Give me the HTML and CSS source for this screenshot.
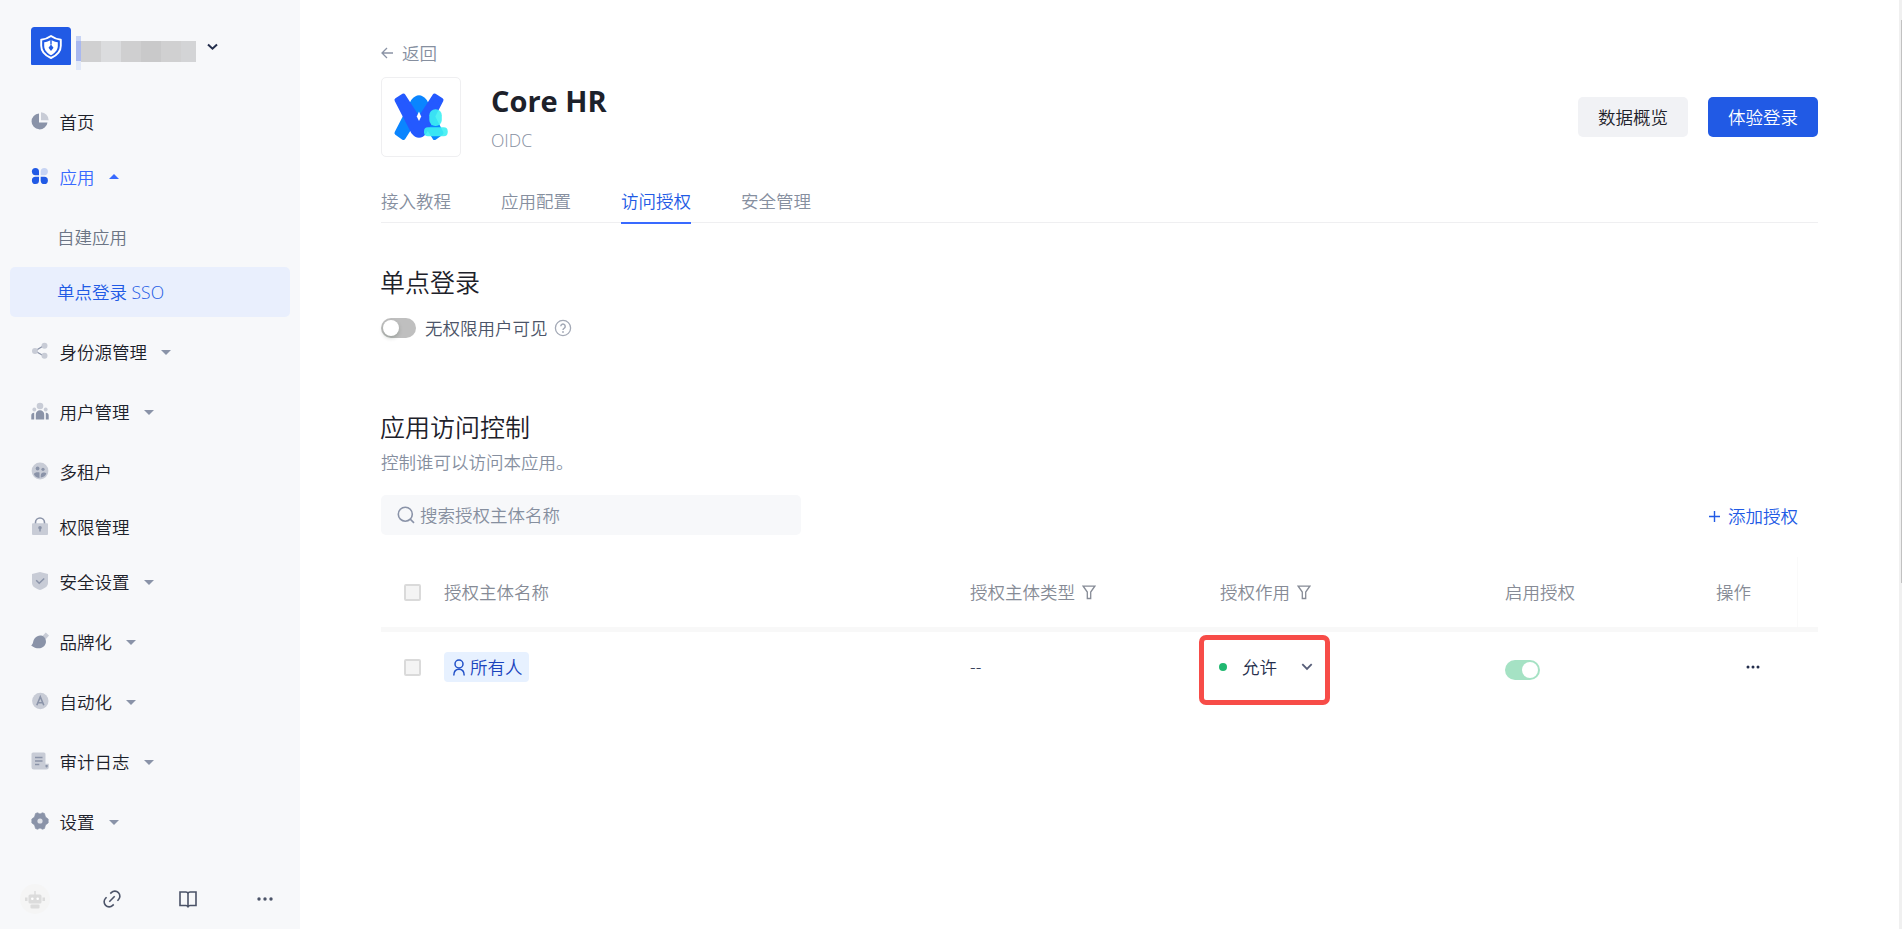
FILE: index.html
```html
<!DOCTYPE html>
<html lang="zh-CN">
<head>
<meta charset="utf-8">
<title>Core HR</title>
<link rel="stylesheet" href="styles.css">
</head>
<body>
<div class="app">
  <aside class="sidebar">
    <div class="brand">
      <svg class="brand-logo" width="40" height="38" viewBox="0 0 40 38"><path d="M3.500 0h33A3.500 3.500 0 0 1 40 3.500V37a1 1 0 0 1-1 1H1a1 1 0 0 1-1-1V3.500A3.500 3.500 0 0 1 3.500 0z" fill="#215ae5"/><path d="M20 9c3 2.200 6 3.200 9.800 3.800v6c0 5.700-4 9.800-9.800 12.200-5.800-2.400-9.800-6.500-9.800-12.200v-6C13.900 12.200 17 11.200 20 9z" fill="none" stroke="#fff" stroke-width="1.900" stroke-linejoin="round"/><path d="M20 13c2.300 1.300 4.500 2 6.800 2.300v3.700c0 4-3 7.200-6.800 9.200-3.800-2-6.800-5.200-6.800-9.200v-3.700C15.500 15 17.700 14.300 20 13z" fill="#fff"/><path d="M19.300 13h1.400v4.500h-1.400zM20 17.500l2.500 3.300L20 24l-2.500-3.200z" fill="#215ae5"/></svg>
      <div class="mosaic"><i class="m0"></i><i class="m1"></i><i class="m2"></i><i class="m3"></i><i class="m4"></i><i class="m5"></i><i class="m6"></i></div>
      <svg class="brand-arrow" width="11" height="8" viewBox="0 0 11 8"><path d="M1 1.500l4.500 4.200L10 1.500" fill="none" stroke="#242e4c" stroke-width="2"/></svg>
    </div>
    <nav class="nav">
      <a class="item"><svg class="ico" viewBox="0 0 18 18"><path d="M8 1.400a8 8 0 1 0 8.500 9H8z" fill="#8a93a8"/><path d="M10 .3a8 8 0 0 1 7.700 8H10z" fill="#c8ccd6"/></svg><span>首页</span></a>
      <a class="item wide open"><svg class="ico" viewBox="0 0 18 18"><g fill="#215ae5"><path d="M4.500 1A3.600 3.600 0 1 0 4.500 8.200H8V4.500A3.600 3.600 0 0 0 4.500 1z"/><path d="M4.500 17A3.600 3.600 0 1 1 4.500 9.800H8v3.600A3.600 3.600 0 0 1 4.500 17z"/><path d="M13.300 17A3.600 3.600 0 1 0 13.300 9.800H9.700v3.600a3.600 3.600 0 0 0 3.600 3.600z"/></g><path d="M13.300 1A3.600 3.600 0 1 1 13.300 8.200H9.700V4.500A3.600 3.600 0 0 1 13.300 1z" fill="#c7d4f3"/></svg><span>应用</span><b class="caret up"></b></a>
      <a class="item sub">自建应用</a>
      <a class="item sub wide active">单点登录 SSO</a>
      <a class="item wide"><svg class="ico" viewBox="0 0 18 18"><path d="M13 3.500L4 9l9 5" fill="none" stroke="#8a93a8" stroke-width="1.300"/><g fill="#c8ccd6"><circle cx="13.500" cy="3.800" r="3"/><circle cx="4" cy="8.900" r="3"/><circle cx="13.500" cy="13.800" r="3"/></g></svg><span>身份源管理</span><b class="caret"></b></a>
      <a class="item wide"><svg class="ico" viewBox="0 0 18 18"><g fill="#c8ccd6"><circle cx="9" cy="4" r="3.300"/><circle cx="3.300" cy="7.500" r="1.900"/><circle cx="14.700" cy="7.500" r="1.900"/></g><path d="M4.800 17.500v-5a4.200 4.200 0 0 1 8.400 0v5zM3.200 10.800v6.700H.3v-4a2.800 2.800 0 0 1 2.900-2.700zM14.800 10.800v6.700h2.900v-4a2.800 2.800 0 0 0-2.900-2.700z" fill="#8a93a8"/></svg><span>用户管理</span><b class="caret"></b></a>
      <a class="item"><svg class="ico" viewBox="0 0 18 18"><circle cx="9" cy="9" r="8.400" fill="#c8ccd6"/><g fill="#8a93a8"><circle cx="6.600" cy="6.500" r="1.900"/><circle cx="12" cy="7.300" r="1.600"/><path d="M2.800 12c1-1.500 3.300-2.200 5.700-1.500V16C5.500 15.600 3.600 14.200 2.800 12zM9.800 15.500c-.2-3 .2-4.600 2.500-5 1.400-.1 2.500.4 3 1-.6 2.200-2.700 3.800-5.500 4z"/></g></svg><span>多租户</span></a>
      <a class="item"><svg class="ico" viewBox="0 0 18 18"><path d="M4.500 7V5.500a4.500 4.500 0 0 1 9 0V7" fill="none" stroke="#8a93a8" stroke-width="1.600"/><rect x="1" y="6.300" width="16" height="11.700" rx="1" fill="#c8ccd6"/><circle cx="9" cy="10.800" r="1.800" fill="#8a93a8"/><path d="M9 11v3.500" stroke="#8a93a8" stroke-width="1.500"/></svg><span>权限管理</span></a>
      <a class="item wide"><svg class="ico" viewBox="0 0 18 18"><path d="M9 .1l8 1.900v9c0 3.500-3.500 5.600-8 7-4.500-1.400-8-3.500-8-7V2z" fill="#c8ccd6"/><path d="M5.200 8.300l3 3 5-4.800" fill="none" stroke="#8a93a8" stroke-width="1.500"/></svg><span>安全设置</span><b class="caret"></b></a>
      <a class="item wide"><svg class="ico" viewBox="0 0 18 18"><path d="M11 4.500L14.800.500 18 3.600 14.500 7.500z" fill="#c8ccd6"/><path d="M.2 13.500C2.500 12 1.700 8.500 4 6c2.500-2.900 6.500-3.300 9-1 2.700 2.600 2.600 6.700 0 9.300-2.700 2.700-8 3-12.800-.8z" fill="#8a93a8"/></svg><span>品牌化</span><b class="caret"></b></a>
      <a class="item wide"><svg class="ico" viewBox="0 0 18 18"><circle cx="9.300" cy="9" r="8.200" fill="#c8ccd6"/><path d="M5.800 13.200L9.300 4.800l3.500 8.400M7 10.700h4.600" fill="none" stroke="#8a93a8" stroke-width="1.600"/></svg><span>自动化</span><b class="caret"></b></a>
      <a class="item wide"><svg class="ico" viewBox="0 0 18 18"><path d="M2 .5h11a1.500 1.500 0 0 1 1.500 1.500v9.800h3.300v3a2.600 2.600 0 0 1-2.600 2.700H3a2.400 2.400 0 0 1-2.500-2.500V2A1.500 1.500 0 0 1 2 .5z" fill="#c8ccd6"/><path d="M4 5.500h7.500M4 9h7.500M4 12.500h4.300" stroke="#8a93a8" stroke-width="1.400"/><path d="M14.500 13h2.200v1.500a1.100 1.100 0 0 1-2.200 0z" fill="#8a93a8"/></svg><span>审计日志</span><b class="caret"></b></a>
      <a class="item wide"><svg class="ico" viewBox="0 0 18 18"><path d="M4.500 1.500l2-.8L9 2l2.500-1.300 2 .8 1 3.500L17.200 7v4l-2.700 2-1 3.500-2 .8L9 16l-2.500 1.300-2-.8-1-3.500L.8 11V7l2.700-2z" fill="#8a93a8" stroke="#8a93a8" stroke-width=".6" stroke-linejoin="round"/><circle cx="9" cy="9" r="2.600" fill="#dfe2e8"/></svg><span>设置</span><b class="caret"></b></a>
    </nav>
    <div class="foot">
      <svg width="30" height="30" viewBox="0 0 30 30"><circle cx="15" cy="15" r="15" fill="#f5f5f5"/><g fill="#dcdcdc"><rect x="8.500" y="10.500" width="13" height="9" rx="1.500"/><rect x="14.300" y="7" width="1.400" height="4"/><rect x="5" y="13.500" width="2.500" height="3.500"/><rect x="22.500" y="13.500" width="2.500" height="3.500"/><rect x="10.500" y="20.500" width="9" height="4" rx="1"/></g><circle cx="12.300" cy="14.800" r="1.300" fill="#fff"/><circle cx="17.700" cy="14.800" r="1.300" fill="#fff"/></svg>
      <svg width="18" height="18" viewBox="0 0 18 18"><g fill="none" stroke="#4b5368" stroke-width="1.600"><path d="M6.300 11.700l5.400-5.400"/><path d="M7.300 3.600l1-1A4.800 4.800 0 0 1 15.400 9.700l-1 1M10.700 14.400l-1 1A4.800 4.800 0 0 1 2.600 8.300l1-1"/></g></svg>
      <svg width="18" height="18" viewBox="0 0 18 18"><path d="M1 2h5.800Q9 2 9 3.800 9 2 11.200 2H17v13.500h-5.800Q9 15.500 9 17.500 9 15.500 6.800 15.500H1zM9 3.800V17" fill="none" stroke="#4b5368" stroke-width="1.600"/></svg>
      <svg width="18" height="18" viewBox="0 0 18 18"><g fill="#4b5368"><circle cx="3" cy="9" r="1.700"/><circle cx="9" cy="9" r="1.700"/><circle cx="15" cy="9" r="1.700"/></g></svg>
    </div>
  </aside>
  <main class="main">
    <a class="back"><svg width="12" height="12" viewBox="0 0 12 12"><path d="M12 6H1.200M6 1L1 6l5 5" fill="none" stroke="#8a93a5" stroke-width="1.300"/></svg>返回</a>
    <header class="head">
      <div class="app-icon"><svg width="78" height="78" viewBox="0 0 78 78"><g stroke-width="4" stroke-linejoin="round"><path d="M14.500 55L31 23Q37 15.500 43 23L59.500 55 52.500 60 37 35.500 21.500 60z" fill="#0a85ff" stroke="#0a85ff"/><path d="M14.500 22L21.500 17.500 37 41.500 52.500 17.500 59.500 22 43 54Q37 61.500 31 54z" fill="#2459ff" stroke="#2459ff"/></g><path d="M37 33.500l2.200 5-2.200 4.500-2.200-4.500z" fill="#fff"/><rect x="47.300" y="31.300" width="12.500" height="16.700" rx="6" fill="#3df0f3" opacity=".9"/><rect x="42" y="49.300" width="23.700" height="9" rx="4" fill="#3df0f3" opacity=".9"/></svg></div>
      <div class="titles"><h1>Core HR</h1><p>OIDC</p></div>
      <div class="actions"><button class="btn">数据概览</button><button class="btn primary">体验登录</button></div>
    </header>
    <div class="tabs"><a>接入教程</a><a>应用配置</a><a class="on">访问授权</a><a>安全管理</a></div>
    <h2 class="sso-title">单点登录</h2>
    <div class="visible-row"><i class="switch"></i><span>无权限用户可见</span><svg width="18" height="18" viewBox="0 0 18 18"><circle cx="9" cy="9" r="7.600" fill="none" stroke="#a3a9b6" stroke-width="1.300"/><path d="M6.800 7.200a2.200 2.200 0 1 1 3.500 1.900C9.300 9.700 9 10 9 11" fill="none" stroke="#a3a9b6" stroke-width="1.500"/><circle cx="9" cy="13" r=".9" fill="#a3a9b6"/></svg></div>
    <h2 class="ctl-title">应用访问控制</h2>
    <p class="desc">控制谁可以访问本应用。</p>
    <div class="tools">
      <div class="search"><svg width="18" height="18" viewBox="0 0 18 18"><circle cx="8.300" cy="8.200" r="7" fill="none" stroke="#8a93a8" stroke-width="1.600"/><path d="M13.200 13.200l3.800 3.600" stroke="#8a93a8" stroke-width="1.600"/></svg>搜索授权主体名称</div>
      <a class="add"><svg width="11" height="11" viewBox="0 0 11 11"><path d="M5.500 0v11M0 5.500h11" stroke="#215ae5" stroke-width="1.400"/></svg>添加授权</a>
    </div>
    <div class="table">
      <div class="row thead">
        <i class="check"></i><span class="name">授权主体名称</span>
        <span class="type">授权主体类型<svg class="filter" viewBox="0 0 14 15"><path d="M1.200 1.200h11.600L8.700 7v6.500H5.300V7z" fill="none" stroke="#868b96" stroke-width="1.300"/></svg></span>
        <span class="effect">授权作用<svg class="filter" viewBox="0 0 14 15"><path d="M1.200 1.200h11.600L8.700 7v6.500H5.300V7z" fill="none" stroke="#868b96" stroke-width="1.300"/></svg></span>
        <span class="enable">启用授权</span><span class="ops">操作</span>
      </div>
      <div class="row body">
        <i class="check"></i>
        <span class="name"><span class="tag"><svg width="12" height="17" viewBox="0 0 12 17"><circle cx="6" cy="5" r="4" fill="none" stroke="#2150c8" stroke-width="1.500"/><path d="M.8 16.500c0-4 2-6.300 5.200-6.300s5.200 2.300 5.200 6.300" fill="none" stroke="#2150c8" stroke-width="1.500"/></svg>所有人</span></span>
        <span class="type dark">--</span>
        <span class="effect"><span class="select"><i class="dot"></i>允许<svg width="12" height="8" viewBox="0 0 12 8"><path d="M1.300 1.200L6 5.900l4.700-4.700" fill="none" stroke="#565d78" stroke-width="1.800"/></svg></span></span>
        <span class="enable"><i class="switch green"></i></span>
        <span class="ops"><svg class="more" width="14" height="4" viewBox="0 0 14 4"><g fill="#242e4c"><circle cx="2" cy="2" r="1.500"/><circle cx="7" cy="2" r="1.500"/><circle cx="12" cy="2" r="1.500"/></g></svg></span>
      </div>
    </div>
  </main>
  <div class="scroll"><i></i></div>
</div>
</body>
</html>
```
FILE: styles.css
```css
* { box-sizing: border-box; }
body { margin: 0; font-family: "Open Sans", "Noto Sans CJK SC", sans-serif; font-size: 17.5px; font-weight: 350; line-height: 26px; color: #1d212a; background: #fff; }
h1, h2, p { margin: 0; }
i { display: block; }
svg { display: block; flex: none; }
.app { display: flex; width: 1902px; height: 929px; overflow: hidden; }
.sidebar { width: 300px; height: 929px; background: #f7f8fa; display: flex; flex-direction: column; flex: none; }
.brand { height: 97px; padding: 27px 0 0 31px; display: flex; align-items: flex-start; }
.mosaic { display: flex; margin: 14px 0 0 5px; height: 21px; }
.mosaic i { width: 20px; background: #d0d0d1; }
.mosaic .m0 { width: 5px; height: 34px; margin-top: -5px; background: linear-gradient(#c8d4f4 0 5px, #a9b8ef 5px 25px, #e1e8f8 25px); }
.mosaic .m2 { background: #dbdcde; }
.mosaic .m3 { background: #cfcfd0; }
.mosaic .m4 { background: #c9c9ca; }
.mosaic .m6 { width: 15px; background: #d3d4d6; }
.brand-arrow { margin: 16px 0 0 11px; }
.nav { padding: 0 10px; height: 785px; }
.item { display: flex; align-items: center; height: 50px; margin-bottom: 5px; padding-left: 21px; border-radius: 5px; }
.item.wide { margin-bottom: 10px; }
.ico { width: 18px; height: 18px; margin: -2px 10.500px 0 0; }
.caret { margin-left: 14px; border: 5px solid transparent; border-top-color: #8a93a8; border-bottom: 0; }
.caret.up { border: 5px solid transparent; border-bottom-color: #396aff; border-top: 0; margin-top: -2px; }
.open { color: #396aff; }
.sub { padding-left: 47px; color: #6c7585; }
.active { background: #e9effd; color: #215ae5; }
.foot { display: flex; align-items: center; padding: 1px 0 0 20px; height: 32px; }
.foot svg:nth-child(2) { margin-left: 53px; }
.foot svg:nth-child(3) { margin-left: 58px; }
.foot svg:nth-child(4) { margin-left: 59px; }
.main { flex: 1; padding: 40px 81px 0 81px; }
.back { display: flex; align-items: center; gap: 9px; height: 26px; color: #868f9f; }
.head { display: flex; margin-top: 11px; height: 80px; }
.app-icon { width: 80px; height: 80px; border: 1px solid #efeff1; border-radius: 5px; }
.titles { margin-left: 30px; }
.titles h1 { font-size: 29px; line-height: 40px; font-weight: 700; margin-top: 4px; }
.titles p { color: #868f9f; margin-top: 6px; }
.actions { display: flex; gap: 20px; margin: 20px 0 0 auto; }
.btn { width: 110px; height: 40px; padding: 0; border: 0; border-radius: 5px; background: #f1f2f5; color: #1d212a; font: inherit; }
.btn.primary { background: #215ae5; color: #fff; }
.tabs { display: flex; gap: 50px; height: 66px; border-bottom: 1px solid #efeff1; color: #868f9f; }
.tabs a { height: 67px; padding-top: 31px; }
.tabs .on { color: #215ae5; border-bottom: 2px solid #396aff; }
h2 { font-size: 25px; line-height: 36px; font-weight: 350; margin-left: -1px; }
.sso-title { margin-top: 41px; }
.visible-row { display: flex; align-items: center; height: 26px; margin-top: 15px; color: #4b5468; }
.visible-row span { margin: 0 6px 0 9px; }
.switch { width: 35px; height: 20px; border-radius: 10px; background: #bfbfbf; padding: 2px; }
.switch::before { content: ""; display: block; width: 16px; height: 16px; border-radius: 50%; background: #fff; box-shadow: 0 2px 4px rgba(0, 35, 11, .2); }
.switch.green { background: #a5e2c4; padding-left: 17px; }
.switch.green::before { box-shadow: none; }
.ctl-title { margin-top: 68px; }
.desc { color: #868f9f; margin-top: 4px; }
.tools { display: flex; justify-content: space-between; margin-top: 20px; }
.search { display: flex; align-items: center; width: 420px; height: 40px; padding-left: 16px; gap: 5px; border-radius: 5px; background: #f7f8fa; color: #868f9f; }
.add { display: flex; align-items: center; gap: 8px; margin-right: 20px; height: 42px; color: #215ae5; }
.table { margin-top: 20px; }
.row { display: flex; align-items: center; padding-left: 23px; }
.thead { height: 75px; border-bottom: 5px solid #f8f8f8; color: #868b96; background: linear-gradient(#fafafa, #fafafa) 1416px 0 / 1px 100% no-repeat; }
.body { height: 70px; color: #242e4c; }
.check { width: 17px; height: 17px; border: 2px solid #dadada; border-radius: 2px; background: #f4f4f4; }
.name { width: 526px; margin-left: 23px; }
.type { width: 250px; display: flex; align-items: center; }
.effect { width: 285px; display: flex; align-items: center; }
.filter { width: 14px; height: 15px; margin-left: 7px; }
.enable { width: 211px; }
.ops { flex: 1; }
.tag { display: flex; align-items: center; gap: 5px; width: 85px; height: 30px; padding-left: 9px; border-radius: 4px; background: #e7f1ff; color: #1a43bd; }
.select { display: flex; align-items: center; width: 131px; height: 70px; margin: 6px 0 0 -21px; padding: 0 0 7px 15px; border: 5px solid #f74c48; border-radius: 7px; }
.dot { width: 8px; height: 8px; border-radius: 50%; background: #20b870; margin-right: 15px; }
.select svg { margin-left: 24px; }
.body .switch { margin-top: 6px; }
.more { margin-left: 30px; }
.scroll { width: 3px; background: #f0f0f0; }
.scroll i { width: 1px; height: 563px; margin: 20px 0 0 2px; background: #c1c1c1; }
```
